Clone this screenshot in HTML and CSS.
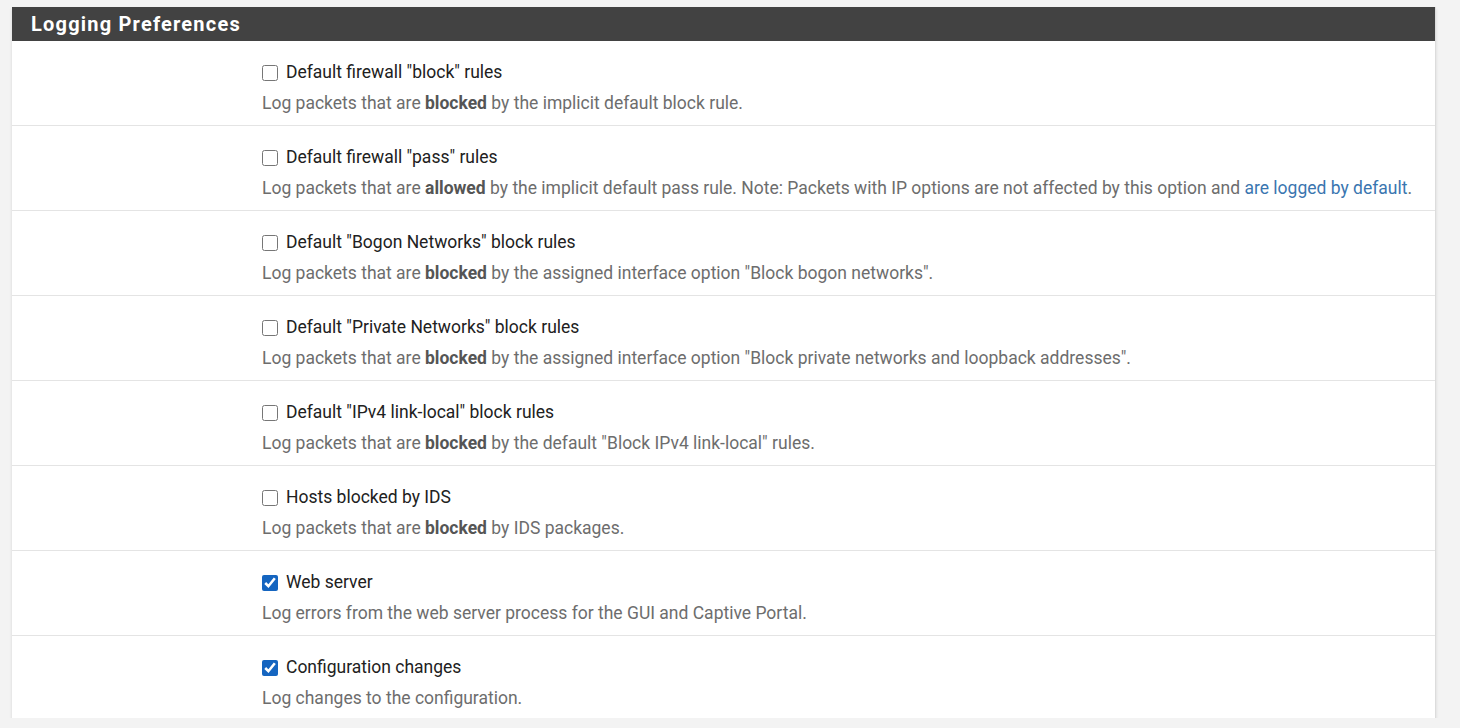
FILE: index.html
```html
<!DOCTYPE html>
<html lang="en">
<head>
    <meta charset="UTF-8">
    <title>Logging Preferences</title>
    <link rel="stylesheet" href="styles.css">
</head>
<body>

<div class="panel">
    <div class="panel-heading">Logging Preferences</div>

    <div class="form-group">
        <div class="col-label"></div>
        <div class="col-field">
            <label class="chk"><input type="checkbox"> Default firewall "block" rules</label>
            <span class="help">Log packets that are <b>blocked</b> by the implicit default block rule.</span>
        </div>
    </div>

    <div class="form-group">
        <div class="col-label"></div>
        <div class="col-field">
            <label class="chk"><input type="checkbox"> Default firewall "pass" rules</label>
            <span class="help">Log packets that are <b>allowed</b> by the implicit default pass rule. Note: Packets with IP options are not affected by this option and <a href="#">are logged by default</a>.</span>
        </div>
    </div>

    <div class="form-group">
        <div class="col-label"></div>
        <div class="col-field">
            <label class="chk"><input type="checkbox"> Default "Bogon Networks" block rules</label>
            <span class="help">Log packets that are <b>blocked</b> by the assigned interface option "Block bogon networks".</span>
        </div>
    </div>

    <div class="form-group">
        <div class="col-label"></div>
        <div class="col-field">
            <label class="chk"><input type="checkbox"> Default "Private Networks" block rules</label>
            <span class="help">Log packets that are <b>blocked</b> by the assigned interface option "Block private networks and loopback addresses".</span>
        </div>
    </div>

    <div class="form-group">
        <div class="col-label"></div>
        <div class="col-field">
            <label class="chk"><input type="checkbox"> Default "IPv4 link-local" block rules</label>
            <span class="help">Log packets that are <b>blocked</b> by the default "Block IPv4 link-local" rules.</span>
        </div>
    </div>

    <div class="form-group">
        <div class="col-label"></div>
        <div class="col-field">
            <label class="chk"><input type="checkbox"> Hosts blocked by IDS</label>
            <span class="help">Log packets that are <b>blocked</b> by IDS packages.</span>
        </div>
    </div>

    <div class="form-group">
        <div class="col-label"></div>
        <div class="col-field">
            <label class="chk"><input type="checkbox" checked> Web server</label>
            <span class="help">Log errors from the web server process for the GUI and Captive Portal.</span>
        </div>
    </div>

    <div class="form-group">
        <div class="col-label"></div>
        <div class="col-field">
            <label class="chk"><input type="checkbox" checked> Configuration changes</label>
            <span class="help">Log changes to the configuration.</span>
        </div>
    </div>
</div>

</body>
</html>
```

FILE: styles.css
```css
body {
    font-family: Roboto, "Noto Sans", sans-serif;
    background-color: #f3f3f3;
    margin: 0;
    padding: 7px 24px 0 12px;
    color: #212121;
}

.panel {
    background-color: white;
    border-right: 1px solid #dcdcdc;
    box-shadow: 0 2px 3px rgba(0, 0, 0, 0.12);
}

.panel-heading {
    background-color: #424242;
    color: white;
    font-size: 20px;
    font-weight: 700;
    letter-spacing: 1.2px;
    height: 34px;
    line-height: 34px;
    padding-left: 19px;
}

.form-group {
    display: flex;
    height: 84px;
    border-bottom: 1px solid #e4e4e4;
    box-sizing: content-box;
}

.form-group:last-child {
    height: 82px;
    border-bottom: none;
}

.col-label {
    width: 250px;
    flex: none;
}

.col-field {
    display: flex;
    flex-direction: column;
    padding-top: 20px;
}

.chk {
    display: flex;
    align-items: center;
    font-size: 17.5px;
    line-height: 22px;
    height: 22px;
}

.chk input {
    width: 16px;
    height: 16px;
    margin: 1px 8px 0 0;
    accent-color: #1565c0;
}

.help {
    font-size: 17.5px;
    line-height: 22px;
    margin-top: 9px;
    color: #6d6d6d;
}

.help b {
    color: #555;
}

.help a {
    color: #3a76b0;
    text-decoration: none;
}
```
